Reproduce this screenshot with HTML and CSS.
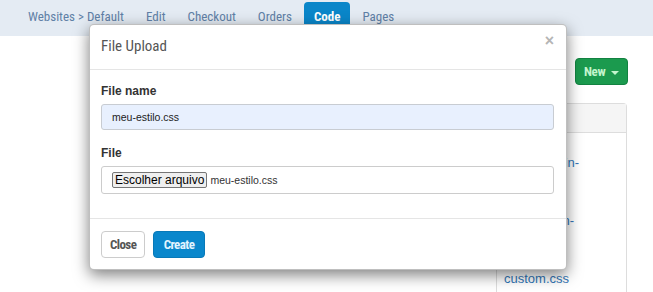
FILE: index.html
```html
<!DOCTYPE html>
<html lang="pt">
<head>
    <meta charset="UTF-8">
    <meta name="viewport" content="width=device-width, initial-scale=1.0">
    <title>Code - File Upload</title>
    <link rel="stylesheet" href="styles.css">
</head>
<body>

    <div class="topbar">
        <nav class="tabs">
            <a class="tab" href="#">Websites &gt; Default</a>
            <a class="tab" href="#">Edit</a>
            <a class="tab" href="#">Checkout</a>
            <a class="tab" href="#">Orders</a>
            <a class="tab active" href="#">Code</a>
            <a class="tab" href="#">Pages</a>
        </nav>
    </div>

    <div class="page">
        <button class="btn-new">New <span class="caret"></span></button>

        <div class="file-card">
            <div class="file-card-head"></div>
            <ul class="file-list">
                <li><a href="#">animate.min-bundle.css</a></li>
                <li><a href="#">select2.min-bundle.css</a></li>
                <li><a href="#">custom.css</a></li>
            </ul>
        </div>
    </div>

    <div class="modal" id="upload-modal">
        <div class="modal-header">
            <h4>File Upload</h4>
            <span class="close">&times;</span>
        </div>
        <div class="modal-body">
            <div class="field">
                <label for="file-name">File name</label>
                <input type="text" id="file-name" value="meu-estilo.css">
            </div>
            <div class="field">
                <label>File</label>
                <div class="file-box">
                    <span class="file-btn">Escolher arquivo</span>
                    <span class="file-chosen">meu-estilo.css</span>
                </div>
            </div>
        </div>
        <div class="modal-footer">
            <button class="btn btn-close">Close</button>
            <button class="btn btn-create">Create</button>
        </div>
    </div>

</body>
</html>
```

FILE: styles.css
```css
body {
    font-family: "Liberation Sans", Arial, sans-serif;
    margin: 0;
    padding: 0;
    background-color: #fff;
    color: #333;
}

.topbar {
    height: 36px;
    background-color: #e4ebf3;
}

.tabs {
    display: flex;
    align-items: flex-end;
    height: 36px;
    padding-left: 18px;
}

.tab {
    height: 29px;
    padding: 5px 10px 0;
    margin-right: 2px;
    line-height: 20px;
    font-family: "Roboto Condensed", Roboto, sans-serif;
    font-stretch: 75%;
    font-size: 13px;
    color: #5f80a6;
    text-decoration: none;
    border-radius: 4px 4px 0 0;
}

.tab.active {
    background-color: #0a86c9;
    color: #fff;
    font-weight: bold;
}

.page {
    display: flex;
    flex-direction: column;
    align-items: flex-end;
    padding: 22px 25px 0;
}

.btn-new {
    width: 53px;
    height: 27px;
    padding: 0;
    background-color: #1b9a4e;
    border: 1px solid #138241;
    border-radius: 4px;
    color: #c2f5cd;
    font-family: "Roboto Condensed", Roboto, sans-serif;
    font-stretch: 75%;
    font-weight: bold;
    font-size: 13px;
    letter-spacing: -0.3px;
}

.caret {
    display: inline-block;
    margin-left: 3px;
    vertical-align: middle;
    border-top: 4px solid #c2f5cd;
    border-left: 4px solid transparent;
    border-right: 4px solid transparent;
}

.file-card {
    width: 129px;
    margin-top: 18px;
    margin-right: 1px;
    border: 1px solid #ddd;
    border-bottom: none;
    border-radius: 4px 4px 0 0;
}

.file-card-head {
    height: 28px;
    background-color: #f5f5f5;
    border-bottom: 1px solid #ddd;
}

.file-list {
    list-style: none;
    margin: 0;
    padding: 11px 7px;
}

.file-list li {
    padding: 10px 0 14px;
    line-height: 17px;
    font-size: 13px;
}

.file-list a {
    color: #3277b8;
    text-decoration: none;
}

.modal {
    position: absolute;
    left: 89px;
    top: 24px;
    width: 476px;
    background-color: #fff;
    border: 1px solid rgba(0, 0, 0, 0.25);
    border-radius: 5px;
    box-shadow: 0 5px 15px rgba(0, 0, 0, 0.5);
}

.modal-header {
    display: flex;
    justify-content: space-between;
    align-items: center;
    height: 44px;
    padding: 0 12px 0 11px;
    border-bottom: 1px solid #e5e5e5;
}

.modal-header h4 {
    margin: 0 0 2px;
    font-family: "Roboto Condensed", Roboto, sans-serif;
    font-stretch: 75%;
    font-weight: normal;
    font-size: 15px;
    color: #555;
}

.close {
    align-self: flex-start;
    margin-top: 8px;
    font-size: 16px;
    font-weight: bold;
    color: #b5b5b5;
    line-height: 1;
}

.modal-body {
    padding: 13px 12px 24px 11px;
}

.field + .field {
    margin-top: 15px;
}

.field label {
    display: block;
    margin-bottom: 5px;
    line-height: 16px;
    font-size: 12px;
    font-weight: bold;
    color: #333;
}

.field input[type="text"] {
    display: block;
    box-sizing: border-box;
    width: 100%;
    height: 26px;
    padding: 0 10px;
    background-color: #e8f0fe;
    border: 1px solid #c8ccd2;
    border-radius: 3px;
    font-family: "Liberation Sans", Arial, sans-serif;
    font-size: 10.5px;
    color: #222;
}

.file-box {
    display: flex;
    align-items: center;
    box-sizing: border-box;
    height: 28px;
    padding: 0 10px;
    border: 1px solid #ccc;
    border-radius: 3px;
}

.file-btn {
    padding: 0 2px;
    height: 14px;
    line-height: 14px;
    background-color: #efefef;
    border: 1px solid #767676;
    border-radius: 2px;
    font-size: 12px;
    color: #000;
}

.file-chosen {
    margin-left: 3px;
    font-size: 10.5px;
    color: #333;
}

.modal-footer {
    display: flex;
    gap: 8px;
    padding: 12px 11px 11px;
    border-top: 1px solid #e5e5e5;
}

.btn {
    height: 27px;
    padding: 0 8px;
    border-radius: 4px;
    font-family: "Roboto Condensed", Roboto, sans-serif;
    font-stretch: 75%;
    font-weight: bold;
    font-size: 13px;
    letter-spacing: -0.6px;
    cursor: pointer;
}

.btn-close {
    width: 44px;
    background-color: #fff;
    border: 1px solid #ccc;
    color: #555;
}

.btn-create {
    width: 52px;
    background-color: #0a87cc;
    border: 1px solid #0879b8;
    color: #e2f4ff;
}
```
